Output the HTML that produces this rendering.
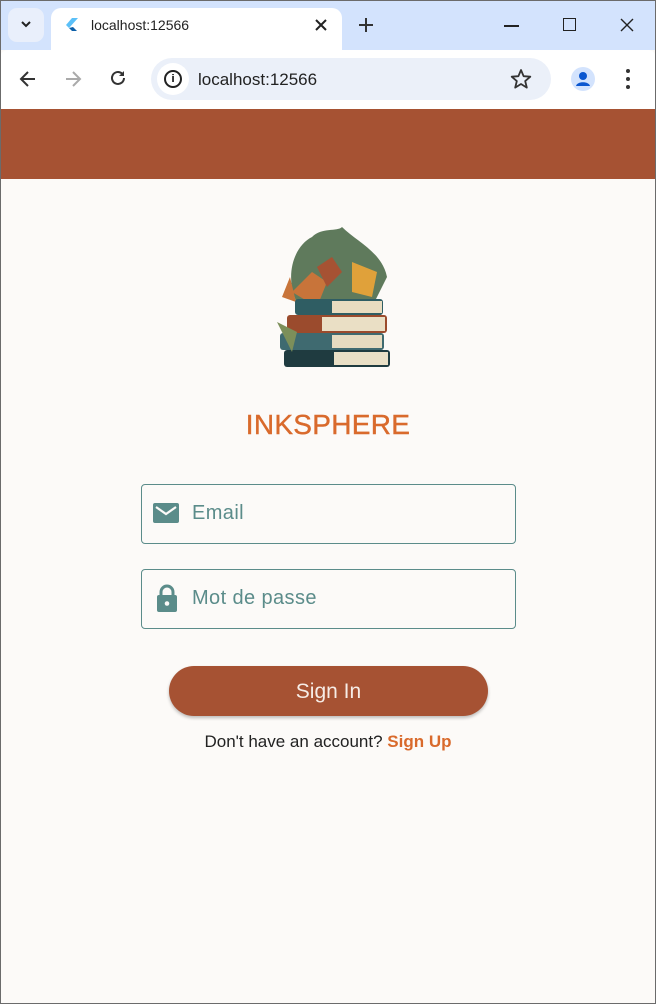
<!DOCTYPE html>
<html><head><meta charset="utf-8"><style>
*{margin:0;padding:0;box-sizing:border-box}
body{width:656px;height:1004px;overflow:hidden;background:#fcfaf8;font-family:"Liberation Sans",sans-serif;position:relative}
.frame{position:absolute;inset:0;border:1px solid #6b6b6b;pointer-events:none;z-index:9}
.tb{position:absolute;left:0;top:0;width:656px;height:50px;background:#d3e3fd}
.tool{position:absolute;left:0;top:50px;width:656px;height:59px;background:#fff;border-radius:8px 8px 0 0}
.tab{position:absolute;left:51px;top:8px;width:291px;height:42px;background:#fff;border-radius:10px 10px 0 0}
.abs{position:absolute}
.appbar{position:absolute;left:0;top:109px;width:656px;height:70px;background:#a65233}
.field{position:absolute;left:141px;width:375px;height:60px;border:1.3px solid #5b8c8a;border-radius:4px}
.field span{position:absolute;left:50px;top:17px;font-size:20px;color:#5b8c8a;letter-spacing:.4px}
</style></head><body>
<div class="tb"></div>
<div class="abs" style="left:8px;top:8px;width:36px;height:34px;background:#e9effb;border-radius:9px"></div>
<svg class="abs" style="left:20px;top:19px" width="12" height="10"><path d="M2 3l4 4 4-4" stroke="#222" stroke-width="2" fill="none"/></svg>
<div class="tab"></div>
<svg class="abs" style="left:64px;top:17px" width="14" height="16"><path d="M8 1L2 8l3 3 9-10z" fill="#5bc0f8"/><path d="M5 11l3 3h5l-4-4z" fill="#0c5fa8"/></svg>
<div class="abs" style="left:91px;top:17px;font-size:14px;color:#222">localhost:12566</div>
<svg class="abs" style="left:315px;top:19px" width="12" height="12"><path d="M1 1l10 10M11 1L1 11" stroke="#222" stroke-width="2"/></svg>
<svg class="abs" style="left:359px;top:18px" width="14" height="14"><path d="M7 0v14M0 7h14" stroke="#333" stroke-width="2"/></svg>
<div class="abs" style="left:504px;top:25px;width:15px;height:1.5px;background:#222"></div>
<div class="abs" style="left:563px;top:18px;width:13px;height:13px;border:1.5px solid #222"></div>
<svg class="abs" style="left:620px;top:18px" width="14" height="14"><path d="M1 1l12 12M13 1L1 13" stroke="#222" stroke-width="1.4"/></svg>
<div class="tool"></div>
<svg class="abs" style="left:18px;top:69px" width="20" height="20"><path d="M17 10H4M10 3L3 10l7 7" stroke="#333" stroke-width="2" fill="none"/></svg>
<svg class="abs" style="left:63px;top:69px" width="20" height="20"><path d="M3 10h13M10 3l7 7-7 7" stroke="#aaa" stroke-width="2" fill="none"/></svg>
<svg class="abs" style="left:108px;top:68px" width="20" height="20"><path d="M16 10a6 6 0 1 1-2-4.5" stroke="#333" stroke-width="2" fill="none"/><path d="M16 3v5h-5z" fill="#333"/></svg>
<div class="abs" style="left:151px;top:58px;width:400px;height:42px;background:#ebf0f9;border-radius:21px"></div>
<div class="abs" style="left:157px;top:63px;width:32px;height:32px;background:#fff;border-radius:50%"></div>
<div class="abs" style="left:164px;top:70px;width:18px;height:18px;border:2px solid #222;border-radius:50%;font-size:11px;font-weight:bold;text-align:center;line-height:14px">i</div>
<div class="abs" style="left:198px;top:70px;font-size:17px;color:#222">localhost:12566</div>
<svg class="abs" style="left:510px;top:68px" width="22" height="22"><path d="M11 2l2.6 6.2 6.7.5-5.1 4.4 1.6 6.5L11 16l-5.8 3.6 1.6-6.5L1.7 8.7l6.7-.5z" stroke="#333" stroke-width="1.8" fill="none" stroke-linejoin="round"/></svg>
<div class="abs" style="left:571px;top:67px;width:24px;height:24px;background:#d3e3fd;border-radius:50%"></div>
<svg class="abs" style="left:571px;top:67px" width="24" height="24"><circle cx="12" cy="9" r="4" fill="#0b57d0"/><path d="M5 19c1-5 13-5 14 0z" fill="#0b57d0"/></svg>
<svg class="abs" style="left:624px;top:68px" width="8" height="22"><circle cx="4" cy="3" r="2" fill="#333"/><circle cx="4" cy="11" r="2" fill="#333"/><circle cx="4" cy="19" r="2" fill="#333"/></svg>
<div class="appbar"></div>

<svg class="abs" style="left:262px;top:222px" width="132" height="150">
<path d="M40 90 C20 60 30 25 50 15 C60 5 75 10 80 5 C95 20 120 30 125 55 L110 85 Z" fill="#5f7a5c"/>
<path d="M30 70l20-20 15 10-10 25z" fill="#c8743a"/>
<path d="M90 40l25 10-5 25-20-5z" fill="#e0a13a"/>
<path d="M55 45l15-10 10 15-15 15z" fill="#a65233"/>
<path d="M20 75l8-20 6 25z" fill="#c8743a"/>
<rect x="33" y="77" width="88" height="16" rx="3" fill="#2f5d63"/>
<rect x="70" y="79" width="50" height="12" fill="#e9dcc0"/>
<rect x="25" y="93" width="100" height="18" rx="3" fill="#9b4b2d"/>
<rect x="60" y="95" width="63" height="14" fill="#eadfc5"/>
<rect x="18" y="111" width="104" height="17" rx="3" fill="#3f6a70"/>
<rect x="70" y="113" width="50" height="13" fill="#e6dbc0"/>
<rect x="22" y="128" width="106" height="17" rx="3" fill="#1f3b40"/>
<rect x="72" y="130" width="54" height="13" fill="#e9dfc6"/>
<path d="M15 100l20 10-5 20z" fill="#7c8f5a"/>
</svg>

<div class="abs" style="left:0;width:656px;top:409px;text-align:center;font-size:28px;color:#d96a2c;letter-spacing:.3px;-webkit-text-stroke:0.4px #d96a2c">INKSPHERE</div>

<div class="field" style="top:484px"><span>Email</span>
<svg class="abs" style="left:11px;top:18px" width="27" height="22"><rect x="0" y="0" width="26" height="20" rx="2" fill="#5b8c8a"/><path d="M3 4l10 7 10-7" stroke="#fcfaf8" stroke-width="2.2" fill="none"/></svg></div>
<div class="field" style="top:569px"><span>Mot de passe</span>
<svg class="abs" style="left:14px;top:14px" width="22" height="29"><path d="M5 12V8a6 6 0 0 1 12 0v4" stroke="#5b8c8a" stroke-width="3" fill="none"/><rect x="1" y="11" width="20" height="17" rx="2" fill="#5b8c8a"/><circle cx="11" cy="19.5" r="2.3" fill="#fcfaf8"/></svg></div>

<div class="abs" style="left:169px;top:666px;width:319px;height:50px;background:#a65233;border-radius:25px;box-shadow:0 2px 3px rgba(0,0,0,.25);text-align:center;line-height:52px;color:#f6ece6;font-size:21px">Sign In</div>
<div class="abs" style="left:0;width:656px;top:732px;text-align:center;font-size:17px;color:#222">Don't have an account? <b style="color:#d96a2c">Sign Up</b></div>
<div class="frame"></div>
</body></html>
